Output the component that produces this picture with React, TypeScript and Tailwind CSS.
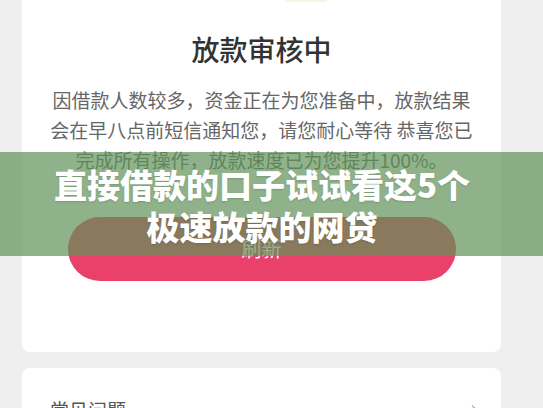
import { ChevronRight } from 'lucide-react'

const cjk = { fontFamily: '"Noto Sans CJK SC", "Noto Sans", sans-serif' }

function ReviewCard() {
  return (
    <div className="rounded-b-[8px] bg-white pb-[71px]">
      {/* bottom edge of the status icon, scrolled out of view */}
      <div className="ml-[263px] h-[2px] w-[42px] rounded-b-full bg-[#faf5e0]" />
      <h1 className="mt-[29px] text-center text-[28px] leading-[36px] font-medium text-[#333]">
        放款审核中
      </h1>
      <p className="mt-[18px] text-center text-[19px] leading-[30px] text-[#666]">
        因借款人数较多，资金正在为您准备中，放款结果
        <br />
        会在早八点前短信通知您，请您耐心等待 恭喜您已
        <br />
        完成所有操作，放款速度已为您提升100%。
      </p>
      <div className="mt-[42px] flex justify-center">
        <button
          type="button"
          className="flex h-[64px] w-[388px] items-center justify-center rounded-full bg-[#e9416a] text-[20px] text-white"
        >
          刷新
        </button>
      </div>
    </div>
  )
}

function FaqCard() {
  return (
    <div className="mt-[16px] flex items-start justify-between rounded-t-[8px] bg-white pt-[29px] pr-[16px] pb-4 pl-[28px]">
      <span className="text-[19px] leading-[26px] text-[#555]">常见问题</span>
      <ChevronRight className="mt-[4px] h-5 w-5 text-[#bbb]" strokeWidth={2} />
    </div>
  )
}

export default function App() {
  return (
    <div className="relative h-[408px] w-[543px] overflow-hidden bg-[#efefef]" style={cjk}>
      <div className="pr-[42px] pl-[22px]">
        <ReviewCard />
        <FaqCard />
      </div>

      {/* article title banner laid over the screenshot */}
      <div className="absolute inset-x-0 top-[152px] bg-[rgba(96,146,88,0.7)] pt-[11px] pr-[19px] pb-[9px] text-center text-[33px] leading-[42px] font-black text-white [text-shadow:0_1px_2px_rgba(0,0,0,0.15)]">
        直接借款的口子试试看这5个
        <br />
        极速放款的网贷
      </div>
    </div>
  )
}
